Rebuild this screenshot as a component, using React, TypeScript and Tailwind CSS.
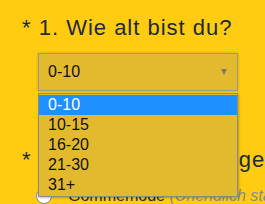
import React from 'react';

const options = ['0-10', '10-15', '16-20', '21-30', '31+'];

export default function App() {
  return (
    <div className="relative w-[265px] h-[204px] overflow-hidden bg-[#ffcc11] font-['Liberation_Sans',Arial,sans-serif]">
      <div className="pl-[22px] pt-[13px]">
        <h2 className="text-[22px] leading-[30px] tracking-[1px] text-[#1e2a38] whitespace-nowrap">* 1. Wie alt bist du?</h2>

        {/* geschlossenes Select */}
        <div className="relative ml-[16px] mt-[10px] w-[200px]">
          <div className="flex h-[38px] items-center justify-between border border-[#9a9a8a] bg-[#e3b92e] pl-[9px] pr-[10px] shadow-[0_0_3px_rgba(0,0,0,0.2)]">
            <span className="text-[16px] text-[#111]">0-10</span>
            <span className="h-0 w-0 border-x-[3.5px] border-t-[6px] border-x-transparent border-t-[#7a7a7a]" />
          </div>

          {/* offene Liste */}
          <ul className="absolute left-0 top-[40px] z-10 w-[200px] border border-[#8a8a8a] bg-[#e3b92e] py-[1px] shadow-[1px_1px_2px_rgba(0,0,0,0.25)]">
            {options.map((o, i) => (
              <li
                key={o}
                className={
                  i === 0
                    ? 'h-[20px] bg-[#1e90ff] pl-[9px] text-[16px] leading-[20px] text-white'
                    : 'h-[20px] pl-[9px] text-[16px] leading-[20px] text-[#111]'
                }
              >
                {o}
              </li>
            ))}
          </ul>
        </div>

        <h2 className="mt-[54px] text-[22px] leading-[30px] tracking-[1px] text-[#1e2a38] whitespace-nowrap">* 2. Welcher Modus gefällt dir?</h2>

        <label className="mt-[9px] ml-[14px] flex items-center gap-[16px] whitespace-nowrap text-[16px]">
          <span className="h-[16px] w-[16px] shrink-0 rounded-full border border-[#888] bg-white" />
          <span className="text-[#1e2a38]">
            Gommemode <i className="text-[#8a8a8a]">(Unendlich stark)</i>
          </span>
        </label>
      </div>
    </div>
  );
}
